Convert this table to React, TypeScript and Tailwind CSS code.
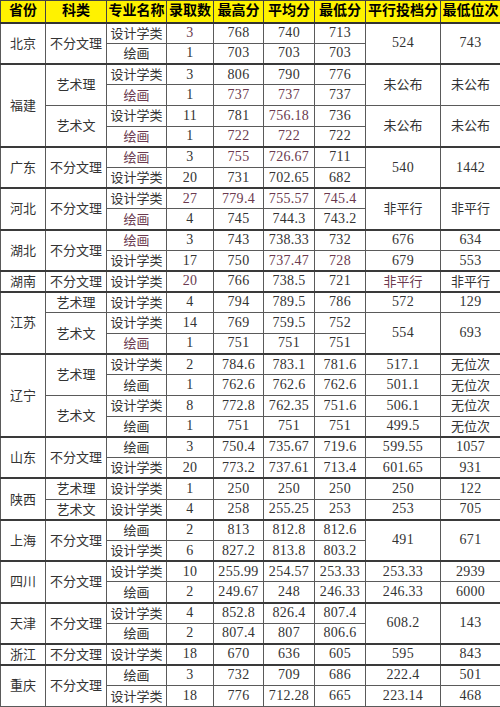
type Cell = { t: string; rs?: number; red?: boolean };

// "*" prefix marks the reddish text seen in the source sheet
const c = (s: string, rs?: number): Cell =>
  s.startsWith("*") ? { t: s.slice(1), rs, red: true } : { t: s, rs };

const groups: Cell[][][] = [
  [
    [c("北京", 2), c("不分文理", 2), c("设计学类"), c("*3"), c("768"), c("740"), c("713"), c("524", 2), c("743", 2)],
    [c("绘画"), c("1"), c("703"), c("703"), c("703")],
  ],
  [
    [c("福建", 4), c("艺术理", 2), c("设计学类"), c("3"), c("806"), c("790"), c("776"), c("未公布", 2), c("未公布", 2)],
    [c("*绘画"), c("1"), c("*737"), c("*737"), c("737")],
    [c("艺术文", 2), c("设计学类"), c("11"), c("781"), c("*756.18"), c("736"), c("未公布", 2), c("未公布", 2)],
    [c("*绘画"), c("1"), c("*722"), c("*722"), c("722")],
  ],
  [
    [c("广东", 2), c("不分文理", 2), c("*绘画"), c("3"), c("*755"), c("*726.67"), c("711"), c("540", 2), c("1442", 2)],
    [c("设计学类"), c("20"), c("731"), c("702.65"), c("682")],
  ],
  [
    [c("河北", 2), c("不分文理", 2), c("设计学类"), c("*27"), c("*779.4"), c("*755.57"), c("*745.4"), c("非平行", 2), c("非平行", 2)],
    [c("*绘画"), c("4"), c("745"), c("744.3"), c("743.2")],
  ],
  [
    [c("湖北", 2), c("不分文理", 2), c("*绘画"), c("3"), c("743"), c("738.33"), c("732"), c("676"), c("634")],
    [c("设计学类"), c("17"), c("750"), c("*737.47"), c("*728"), c("679"), c("553")],
  ],
  [
    [c("湖南"), c("不分文理"), c("设计学类"), c("*20"), c("766"), c("738.5"), c("721"), c("*非平行"), c("非平行")],
  ],
  [
    [c("江苏", 3), c("艺术理"), c("设计学类"), c("4"), c("794"), c("789.5"), c("786"), c("572"), c("129")],
    [c("艺术文", 2), c("设计学类"), c("14"), c("769"), c("759.5"), c("752"), c("554", 2), c("693", 2)],
    [c("*绘画"), c("1"), c("751"), c("751"), c("751")],
  ],
  [
    [c("辽宁", 4), c("艺术理", 2), c("设计学类"), c("2"), c("784.6"), c("783.1"), c("781.6"), c("517.1"), c("无位次")],
    [c("绘画"), c("1"), c("762.6"), c("762.6"), c("762.6"), c("501.1"), c("无位次")],
    [c("艺术文", 2), c("设计学类"), c("8"), c("772.8"), c("762.35"), c("751.6"), c("506.1"), c("无位次")],
    [c("绘画"), c("1"), c("751"), c("751"), c("751"), c("499.5"), c("无位次")],
  ],
  [
    [c("山东", 2), c("不分文理", 2), c("绘画"), c("3"), c("750.4"), c("735.67"), c("719.6"), c("599.55"), c("1057")],
    [c("设计学类"), c("20"), c("773.2"), c("737.61"), c("713.4"), c("601.65"), c("931")],
  ],
  [
    [c("陕西", 2), c("艺术理"), c("设计学类"), c("1"), c("250"), c("250"), c("250"), c("250"), c("122")],
    [c("艺术文"), c("设计学类"), c("4"), c("258"), c("255.25"), c("253"), c("253"), c("705")],
  ],
  [
    [c("上海", 2), c("不分文理", 2), c("绘画"), c("2"), c("813"), c("812.8"), c("812.6"), c("491", 2), c("671", 2)],
    [c("设计学类"), c("6"), c("827.2"), c("813.8"), c("803.2")],
  ],
  [
    [c("四川", 2), c("不分文理", 2), c("设计学类"), c("10"), c("255.99"), c("254.57"), c("253.33"), c("253.33"), c("2939")],
    [c("绘画"), c("2"), c("249.67"), c("248"), c("246.33"), c("246.33"), c("6000")],
  ],
  [
    [c("天津", 2), c("不分文理", 2), c("设计学类"), c("4"), c("852.8"), c("826.4"), c("807.4"), c("608.2", 2), c("143", 2)],
    [c("绘画"), c("2"), c("807.4"), c("807"), c("806.6")],
  ],
  [
    [c("浙江"), c("不分文理"), c("设计学类"), c("18"), c("670"), c("636"), c("605"), c("595"), c("843")],
  ],
  [
    [c("重庆", 2), c("不分文理", 2), c("绘画"), c("3"), c("732"), c("709"), c("686"), c("222.4"), c("501")],
    [c("设计学类"), c("18"), c("776"), c("712.28"), c("665"), c("223.14"), c("468")],
  ],
];

const headers = ["省份", "科类", "专业名称", "录取数", "最高分", "平均分", "最低分", "平行投档分", "最低位次"];
const widths = ["w-[45px]", "w-[61px]", "w-[60px]", "w-[47px]", "w-[50px]", "w-[51px]", "w-[51px]", "w-[75px]", "w-[60px]"];

const isNum = (s: string) => /^[\d.]+$/.test(s);

export default function App() {
  return (
    <div className="w-[500px] h-[707px] bg-white overflow-hidden">
      <table
        className="w-[500px] h-[707px] table-fixed border-collapse text-[13px] leading-none text-[#333]"
        style={{ fontFamily: '"Liberation Serif", "Noto Sans CJK SC", serif' }}
      >
        <colgroup>
          {widths.map((w, i) => (
            <col key={i} className={w} />
          ))}
        </colgroup>
        <thead>
          <tr className="h-[22px] bg-[#fff200]">
            {headers.map((h) => (
              <th
                key={h}
                className="border border-[#444] border-b-2 border-b-[#333] text-center font-bold text-[14px] text-black p-0 whitespace-nowrap"
              >
                {h}
              </th>
            ))}
          </tr>
        </thead>
        <tbody>
          {groups.map((g, gi) =>
            g.map((row, ri) => (
              <tr key={`${gi}-${ri}`} className="h-[20.7px]">
                {row.map((cell, ci) => (
                  <td
                    key={ci}
                    rowSpan={cell.rs}
                    className={
                      "border border-[#5a5a5a] text-center p-0 whitespace-nowrap " +
                      (ri === 0 ? "border-t-2 border-t-[#3a3a3a] " : "") +
                      (isNum(cell.t) ? "text-[14px] tracking-[0.3px] " : "") +
                      (cell.red ? "text-[#6b3a4f]" : "")
                    }
                  >
                    {cell.t}
                  </td>
                ))}
              </tr>
            ))
          )}
        </tbody>
      </table>
    </div>
  );
}
